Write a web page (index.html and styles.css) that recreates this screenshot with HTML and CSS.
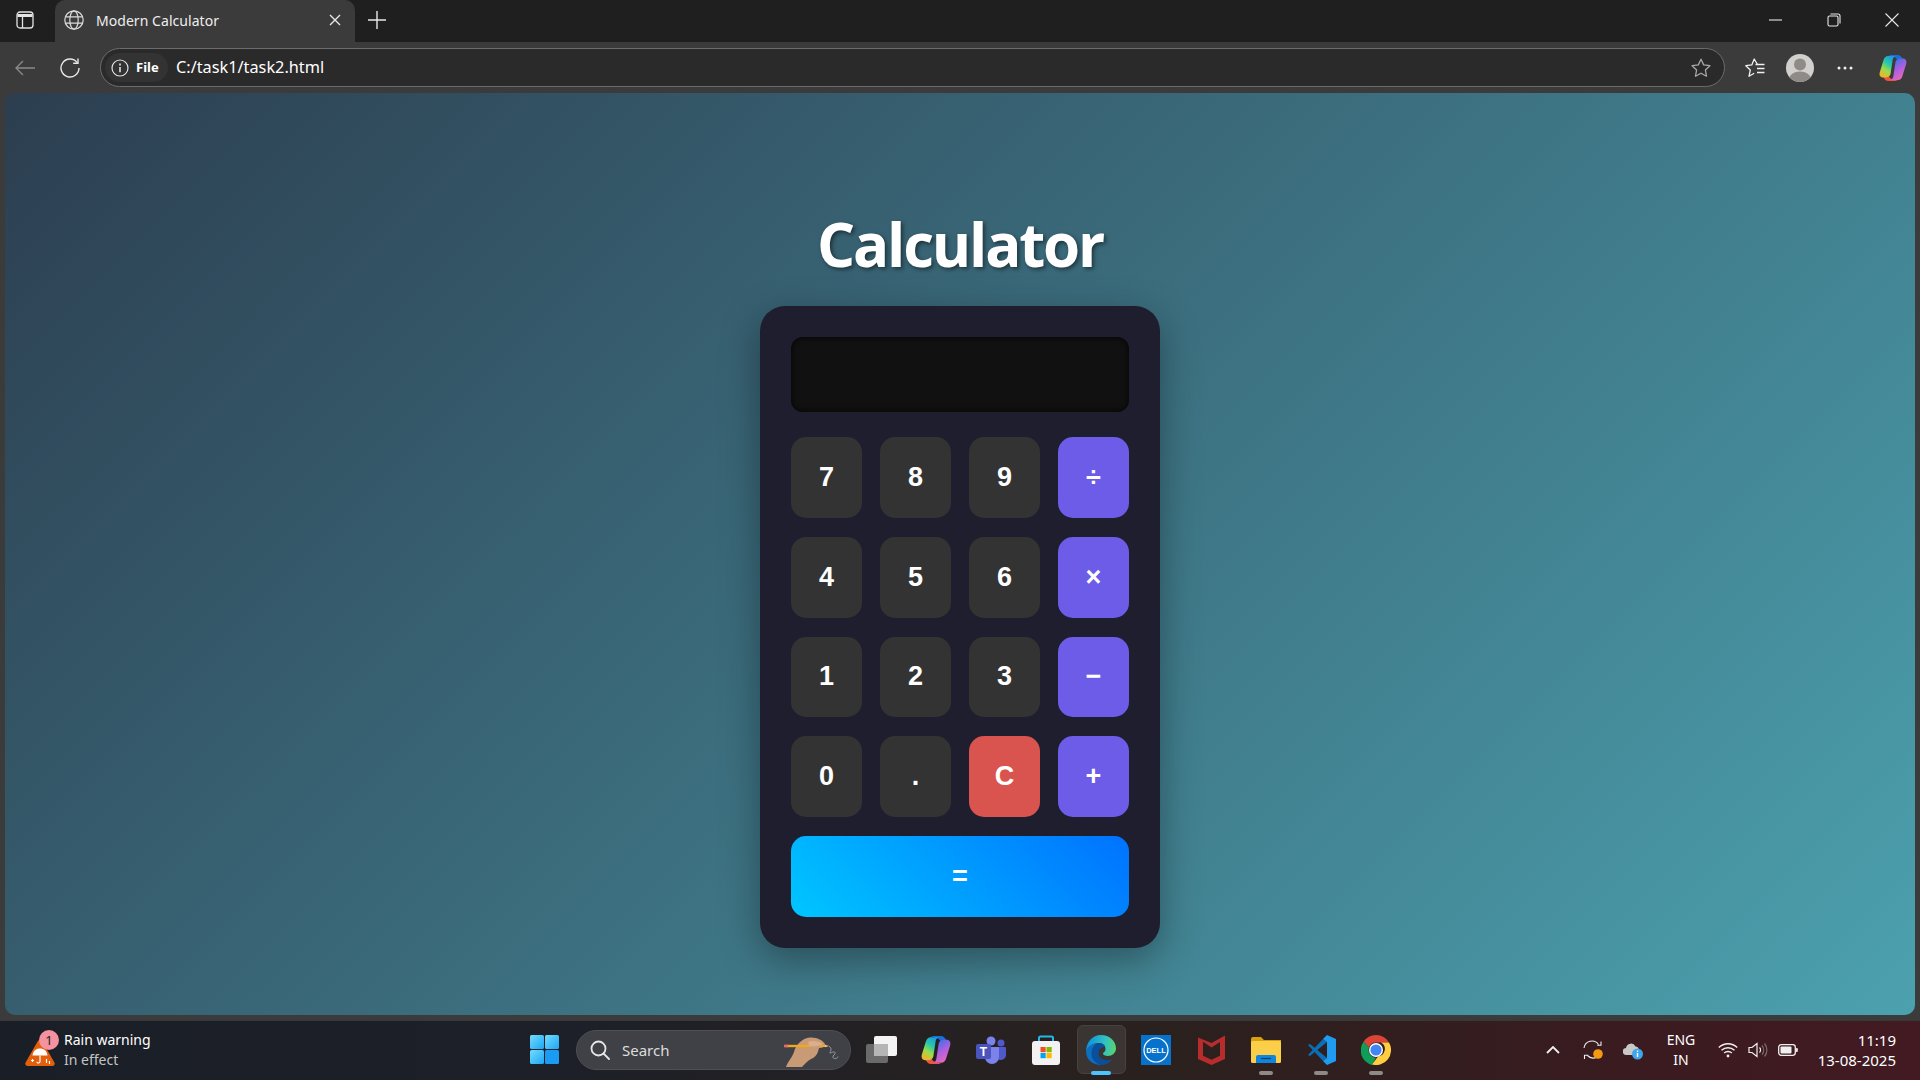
FILE: index.html
```html
<!DOCTYPE html>
<html lang="en">

<head>
    <meta charset="UTF-8">
    <meta name="viewport" content="width=device-width, initial-scale=1.0">
    <title>Modern Calculator</title>
    <link rel="stylesheet" href="styles.css">
</head>

<body>
    <!-- tab strip -->
    <div class="tabstrip">
        <svg class="ico sidebar-ico" viewBox="0 0 18 18" fill="none" stroke="#e4e4e4" stroke-width="1.3">
            <rect x="1" y="1" width="16" height="16" rx="3"/>
            <path d="M1.5 4.5h15" stroke-width="3"/>
            <path d="M6.5 5v12"/>
        </svg>
        <div class="tab">
            <svg class="ico globe-ico" viewBox="0 0 20 20" fill="none" stroke="#dcdcdc" stroke-width="1.2">
                <circle cx="10" cy="10" r="9.2"/>
                <ellipse cx="10" cy="10" rx="4.2" ry="9.2"/>
                <path d="M1.6 6.8h16.8M1.6 13.2h16.8"/>
            </svg>
            <span class="tab-title">Modern Calculator</span>
            <svg class="ico tab-close" viewBox="0 0 12 12" stroke="#e8e8e8" stroke-width="1.4"><path d="M1 1l10 10M11 1L1 11"/></svg>
        </div>
        <svg class="ico new-tab" viewBox="0 0 18 18" stroke="#e8e8e8" stroke-width="1.4"><path d="M9 0v18M0 9h18"/></svg>
        <div class="win-btns">
            <svg class="ico win-ico" viewBox="0 0 14 14" stroke="#e8e8e8" stroke-width="1.1"><path d="M0 7h13"/></svg>
            <svg class="ico win-ico" viewBox="0 0 14 14" fill="none" stroke="#e8e8e8" stroke-width="1.1">
                <rect x="1" y="3" width="10" height="10" rx="1.5"/>
                <path d="M3.5 1h7.5a2 2 0 0 1 2 2v7.5"/>
            </svg>
            <svg class="ico win-ico" viewBox="0 0 14 14" stroke="#e8e8e8" stroke-width="1.1"><path d="M.5.5l13 13M13.5.5l-13 13"/></svg>
        </div>
    </div>

    <!-- toolbar -->
    <div class="toolbar">
        <svg class="ico back-ico" viewBox="0 0 20 16" fill="none" stroke="#8a8a8a" stroke-width="1.3"><path d="M20 8H1M8 1L1 8l7 7"/></svg>
        <svg class="ico reload-ico" viewBox="0 0 20 20" fill="none" stroke="#e8e8e8" stroke-width="1.4">
            <path d="M17.2 4.6A9 9 0 1 0 19 10"/>
            <path d="M18 .5v4.7h-4.8"/>
        </svg>
        <div class="urlbar">
            <div class="file-pill">
                <svg class="ico info-ico" viewBox="0 0 18 18" fill="none" stroke="#e0e0e0" stroke-width="1.2">
                    <circle cx="9" cy="9" r="8"/>
                    <path d="M9 8v5.2" stroke-width="1.6"/>
                    <path d="M9 4.6v1.8" stroke-width="1.7"/>
                </svg>
                <span class="file-label">File</span>
            </div>
            <span class="url-text">C:/task1/task2.html</span>
            <svg class="ico star-ico" viewBox="0 0 20 20" fill="none" stroke="#a8a8a8" stroke-width="1.3" stroke-linejoin="round">
                <path d="M10 1.2l2.7 5.7 6.2.8-4.5 4.3 1.1 6.2L10 15.2l-5.5 3 1.1-6.2L1.1 7.7l6.2-.8z"/>
            </svg>
        </div>
        <svg class="ico fav-ico" viewBox="0 0 20 20" fill="none" stroke="#f0f0f0" stroke-width="1.3" stroke-linejoin="round">
            <path d="M12.5 6.5L9.2 1 6.8 6.9.8 7.7l4.5 4.3-1.3 6.3 5.2-3"/>
            <path d="M10.5 6.5h9M12 10.5h7.5M12 14.5h7.5"/>
        </svg>
        <svg class="ico avatar-ico" viewBox="0 0 28 28">
            <defs><clipPath id="av"><circle cx="14" cy="14" r="14"/></clipPath></defs>
            <circle cx="14" cy="14" r="14" fill="#d2d0cc"/>
            <g clip-path="url(#av)" fill="#8f8c88">
                <circle cx="14" cy="10.5" r="6"/>
                <ellipse cx="14" cy="25" rx="11" ry="7.5"/>
            </g>
        </svg>
        <svg class="ico dots-ico" viewBox="0 0 16 4" fill="#f0f0f0">
            <circle cx="2" cy="2" r="1.5"/><circle cx="8" cy="2" r="1.5"/><circle cx="14" cy="2" r="1.5"/>
        </svg>
        <svg class="ico copilot-ico" viewBox="0 0 28 28">
            <defs>
                <linearGradient id="cpL" x1="0.7" y1="0" x2="0.2" y2="1">
                    <stop offset="0" stop-color="#1b9be6"/><stop offset=".35" stop-color="#27c9a8"/>
                    <stop offset=".65" stop-color="#9bdc4a"/><stop offset="1" stop-color="#f7b02a"/>
                </linearGradient>
                <linearGradient id="cpR" x1="0.3" y1="0" x2="0.8" y2="1">
                    <stop offset="0" stop-color="#3a6fe8"/><stop offset=".5" stop-color="#b15fe0"/>
                    <stop offset="1" stop-color="#f06bb0"/>
                </linearGradient>
            </defs>
            <path fill="#1a6fd8" d="M9 1h9.500c2.500 0 4 1.500 5 4l1 3-6-1c-1-3-2-4-4-4z"/>
            <path fill="#f2553d" d="M19 27H9.500c-2.500 0-4-1.500-5-4l-1-3 6 1c1 3 2 4 4 4z"/>
            <path fill="url(#cpL)" d="M9 2h8c-1.500 0-2.800 1.200-3.300 3.500L11.500 20c-.6 2.400-2.500 3.500-5.500 3.500H4c-2.800 0-4-2.500-3.200-5.300L4.400 6.500C5.200 3.500 6.800 2 9 2z"/>
            <path fill="url(#cpR)" d="M19 26h-8c1.500 0 2.800-1.200 3.300-3.500L16.500 8c.6-2.400 2.500-3.500 5.500-3.500h2c2.800 0 4 2.500 3.200 5.300l-3.600 11.700C22.800 24.500 21.200 26 19 26z"/>
        </svg>
    </div>

    <!-- the page itself -->
    <div class="viewport">
        <main class="page">
            <h1 class="page-title">Calculator</h1>
            <div class="calculator">
                <div class="display"></div>
                <div class="buttons">
                    <button class="btn">7</button>
                    <button class="btn">8</button>
                    <button class="btn">9</button>
                    <button class="btn op">÷</button>
                    <button class="btn">4</button>
                    <button class="btn">5</button>
                    <button class="btn">6</button>
                    <button class="btn op">×</button>
                    <button class="btn">1</button>
                    <button class="btn">2</button>
                    <button class="btn">3</button>
                    <button class="btn op">−</button>
                    <button class="btn">0</button>
                    <button class="btn">.</button>
                    <button class="btn clear">C</button>
                    <button class="btn op">+</button>
                    <button class="btn equal">=</button>
                </div>
            </div>
        </main>
    </div>

    <!-- windows taskbar -->
    <div class="taskbar">
        <div class="weather">
            <div class="weather-icon">
                <svg class="ico rain-ico" viewBox="0 0 30 30">
                    <path fill="#e35f0c" d="M15 3c1 0 1.800.5 2.400 1.500l12 21c.9 1.700 0 3.500-2 3.500H2.600c-2 0-2.900-1.800-2-3.500l12-21C13.200 3.500 14 3 15 3z"/>
                    <path fill="#fff" d="M7.500 18.500C8 14 11 11.500 15 11.500s7 2.500 7.500 7z"/>
                    <path fill="none" stroke="#fff" stroke-width="1.200" d="M15 18.500v6c0 2-3 2-3 .2"/>
                    <path stroke="#fff" stroke-width="1.200" d="M7.500 22v3M6 23.500h3M21.500 22v4M24.500 24v3"/>
                </svg>
                <span class="weather-badge">1</span>
            </div>
            <div class="weather-text">
                <span class="weather-title">Rain warning</span>
                <span class="weather-sub">In effect</span>
            </div>
        </div>

        <div class="task-center">
            <div class="task-slot">
                <svg class="ico start-ico" viewBox="0 0 29 29">
                    <defs>
                        <linearGradient id="winA" x1="0" y1="0" x2="1" y2="1"><stop offset="0" stop-color="#74dcfb"/><stop offset="1" stop-color="#1ba6f5"/></linearGradient>
                    </defs>
                    <rect x="0" y="0" width="14" height="14" rx="1.500" fill="url(#winA)"/>
                    <rect x="15" y="0" width="14" height="14" rx="1.500" fill="url(#winA)"/>
                    <rect x="0" y="15" width="14" height="14" rx="1.500" fill="url(#winA)"/>
                    <rect x="15" y="15" width="14" height="14" rx="1.500" fill="#1a9cf2"/>
                </svg>
            </div>
            <div class="search-box">
                <svg class="ico search-ico" viewBox="0 0 20 20" fill="none" stroke="#e6e6e6" stroke-width="1.800">
                    <circle cx="8.500" cy="8.500" r="7"/><path d="M13.500 13.500l5.500 5.500" stroke-linecap="round"/>
                </svg>
                <span class="search-text">Search</span>
                <svg class="ico hand-ico" viewBox="0 0 66 34">
                    <path fill="none" stroke="#9a9a9a" stroke-width="1" d="M47 12.500c3 1 2 4 1 6s4-2 5 0-3 3-2 5 5 1 5-1"/>
                    <path fill="#c99a76" d="M4 33C6 27 10 24 12 18 14 10 21 4 28 3.500 34 3 41 6 43 10c.5 3-3 4-6 4-1 5-3 9-8 11-4 2-6 5-9 8z"/>
                    <path stroke="#f0a81e" stroke-width="2.400" d="M4 12h24"/>
                    <path stroke="#e86b6b" stroke-width="2.600" d="M2 12h4"/>
                    <path fill="#dcae8a" d="M26 8c4-2 11-1 15 2-3 2-10 3-14 2z"/>
                    <path stroke="#f0a81e" stroke-width="2" d="M38 12h6"/>
                    <path fill="#e8c79a" d="M43 10.800l4 1.200-4 1.200z"/>
                </svg>
            </div>
            <div class="task-slot">
                <svg class="ico taskview-ico" viewBox="0 0 31 27">
                    <rect x="0" y="8" width="22" height="19" rx="2" fill="#6a6a6a"/>
                    <rect x="8" y="0" width="23" height="20" rx="2" fill="#f4f4f4"/>
                    <path d="M8 8h14v12H8z" fill="#b5b5b5"/>
                </svg>
            </div>
            <div class="task-slot">
                <svg class="ico task-ico" viewBox="0 0 28 28">
                    <path fill="#1a6fd8" d="M9 1h9.500c2.500 0 4 1.500 5 4l1 3-6-1c-1-3-2-4-4-4z"/>
                    <path fill="#f2553d" d="M19 27H9.500c-2.500 0-4-1.500-5-4l-1-3 6 1c1 3 2 4 4 4z"/>
                    <path fill="url(#cpL)" d="M9 2h8c-1.500 0-2.800 1.200-3.300 3.500L11.500 20c-.6 2.400-2.500 3.500-5.500 3.500H4c-2.800 0-4-2.500-3.200-5.300L4.400 6.500C5.200 3.500 6.800 2 9 2z"/>
                    <path fill="url(#cpR)" d="M19 26h-8c1.500 0 2.800-1.200 3.300-3.500L16.500 8c.6-2.400 2.500-3.500 5.500-3.500h2c2.800 0 4 2.500 3.200 5.300l-3.600 11.700C22.800 24.500 21.200 26 19 26z"/>
                </svg>
            </div>
            <div class="task-slot">
                <svg class="ico task-ico" viewBox="0 0 30 30">
                    <circle cx="15" cy="6" r="4.500" fill="#7b83eb"/>
                    <circle cx="25" cy="8" r="3.500" fill="#5059c9"/>
                    <path fill="#5059c9" d="M20 12h9a1 1 0 0 1 1 1v7a5 5 0 0 1-5 5c-3 0-5-2-5-5z"/>
                    <path fill="#7b83eb" d="M9 12h13a1 1 0 0 1 1 1v9a7 7 0 0 1-14 0z"/>
                    <rect x="0" y="9" width="15" height="15" rx="2" fill="#4b53bc"/>
                    <text class="teams-t" x="7.500" y="21">T</text>
                </svg>
            </div>
            <div class="task-slot">
                <svg class="ico task-ico" viewBox="0 0 30 30">
                    <path fill="none" stroke="#22b8e8" stroke-width="2" d="M8 8V3a1.500 1.500 0 0 1 1.500-1.500h11A1.500 1.500 0 0 1 22 3v5"/>
                    <rect x="1" y="6" width="28" height="24" rx="3" fill="#f2f2f2"/>
                    <rect x="9.500" y="12" width="5.200" height="5.200" fill="#f25022"/>
                    <rect x="15.500" y="12" width="5.200" height="5.200" fill="#7fba00"/>
                    <rect x="9.500" y="18" width="5.200" height="5.200" fill="#00a4ef"/>
                    <rect x="15.500" y="18" width="5.200" height="5.200" fill="#ffb900"/>
                </svg>
            </div>
            <div class="task-slot active">
                <div class="active-box">
                    <svg class="ico task-ico" viewBox="0 0 30 30">
                        <defs>
                            <linearGradient id="edgeA" x1="0" y1="0.5" x2="1" y2="0.6"><stop offset="0" stop-color="#0f8fdc"/><stop offset=".6" stop-color="#2fc1c4"/><stop offset="1" stop-color="#5ad46e"/></linearGradient>
                        </defs>
                        <path fill="url(#edgeA)" d="M15 0c8.500 0 15 6 15 13.500 0 4.500-4 7.500-8 7.500-3 0-5-1-5-2.500 0-1 2.500-1.500 2.500-4.500 0-3.500-3-6-7-6C7 8 1.500 12 0 17 0 7 6.500 0 15 0z"/>
                        <path fill="#0b6fc0" d="M0 16c2-5 7-8 12-8-4 2-6.500 6-6 11 .5 5 4 9 9.500 11C7 30 0 25 0 16z"/>
                        <path fill="#0a4f9c" d="M12 8.500c4-1 7 1.500 7 3.500-3 0-6.500 2-6.500 6 0 5 5.500 8.500 11 7 1-.3 2-.7 3-1.500C24 28 19.500 30 15.500 30 9 28 5.500 24 5.500 19 5.500 14 8 10 12 8.500z"/>
                    </svg>
                </div>
                <span class="run-dot blue"></span>
            </div>
            <div class="task-slot">
                <svg class="ico task-ico" viewBox="0 0 30 30">
                    <rect width="30" height="30" fill="#0672cb"/>
                    <circle cx="15" cy="15" r="12" fill="none" stroke="#fff" stroke-width="1.200"/>
                    <text class="dell-t" x="15" y="17.600">DELL</text>
                </svg>
            </div>
            <div class="task-slot">
                <svg class="ico mcafee-ico" viewBox="0 0 27 30">
                    <path fill="#b92c2c" d="M13.500 30L0 24V2.500L13.500 8 27 .5V24zM5 6.800v14l8.500 4 8.500-4V7l-8.500 5.500z"/>
                </svg>
            </div>
            <div class="task-slot">
                <svg class="ico task-ico" viewBox="0 0 30 30">
                    <path fill="#d9a00f" d="M0 4a2 2 0 0 1 2-2h8l3 3h17v6H0z"/>
                    <rect x="0" y="6" width="30" height="22" rx="1.500" fill="#fbcf4a"/>
                    <path d="M5 22a2 2 0 0 1 2-2h16a2 2 0 0 1 2 2v6H5z" fill="#0f86dc"/>
                    <path stroke="#093e70" stroke-width="1.200" d="M10 23.500h10"/>
                </svg>
                <span class="run-dot"></span>
            </div>
            <div class="task-slot">
                <svg class="ico task-ico" viewBox="0 0 30 30">
                    <path fill="#0a6fb8" d="M2 10l2-1 17 14-4 3z"/>
                    <path fill="#0a6fb8" d="M2 20l2 1L21 7l-4-3z"/>
                    <path fill="#1f9cf0" d="M21 0l9 4v22l-9 4-4-4 4-3V7l-4-3z"/>
                </svg>
                <span class="run-dot"></span>
            </div>
            <div class="task-slot">
                <svg class="ico task-ico" viewBox="0 0 30 30">
                    <path fill="#db4437" d="M15 0a15 15 0 0 1 13 7.500H15a7.500 7.500 0 0 0-7 5L2.500 6.800A15 15 0 0 1 15 0z"/>
                    <path fill="#0f9d58" d="M2.500 6.800L8 12.500a7.500 7.500 0 0 0 7 10L11 30A15 15 0 0 1 2.500 6.800z"/>
                    <path fill="#ffcd40" d="M28 7.500A15 15 0 0 1 11 29.500l6-8a7.500 7.500 0 0 0 3-14z"/>
                    <circle cx="15" cy="15" r="7" fill="#fff"/>
                    <circle cx="15" cy="15" r="5.600" fill="#4285f4"/>
                </svg>
                <span class="run-dot"></span>
            </div>
        </div>

        <div class="tray">
            <svg class="ico chevron-ico" viewBox="0 0 14 8" fill="none" stroke="#f0f0f0" stroke-width="1.800"><path d="M1 7l6-6 6 6"/></svg>
            <svg class="ico sync-ico" viewBox="0 0 20 20" fill="none" stroke="#efefef" stroke-width="1.100">
                <path d="M1 8a8 8 0 0 1 14.500-3.500M18 1.500v3.800h-3.800"/>
                <path d="M14 17a8 8 0 0 1-9.500-1.500M1.500 19v-3.800h3.800"/>
                <circle cx="15" cy="14" r="4.800" fill="#f59a10" stroke="none"/>
            </svg>
            <svg class="ico cloud-ico" viewBox="0 0 20 20">
                <path fill="#c8c8c8" d="M3.500 15A3.500 3.500 0 0 1 3 8a5 5 0 0 1 9.500-1.500A4 4 0 0 1 16 10v2l-3 3z"/>
                <circle cx="14.500" cy="14" r="5.500" fill="#41a5ee"/>
                <path stroke="#fff" stroke-width="1.400" d="M14.500 13v4M14.500 10.500v1.400"/>
            </svg>
            <div class="lang"><span>ENG</span><span>IN</span></div>
            <svg class="ico wifi-ico" viewBox="0 0 20 16" fill="none" stroke="#f0f0f0" stroke-width="1.400">
                <path d="M.8 5.500a13 13 0 0 1 18.400 0M3.500 8.300a9.500 9.500 0 0 1 13 0M6.200 11a5.500 5.500 0 0 1 7.600 0"/>
                <circle cx="10" cy="14" r="1.400" fill="#f0f0f0" stroke="none"/>
            </svg>
            <svg class="ico sound-ico" viewBox="0 0 20 16" fill="none" stroke="#f0f0f0" stroke-width="1.200">
                <path d="M1 5.500h3L9 1.500v13l-5-4H1z"/>
                <path d="M11.500 5.500a3.500 3.500 0 0 1 0 5"/>
                <path d="M14 3.500a7 7 0 0 1 0 9M16.500 1.500a10 10 0 0 1 0 13" stroke="#7d6a6c"/>
            </svg>
            <svg class="ico battery-ico" viewBox="0 0 20 12">
                <rect x=".7" y=".7" width="16.600" height="10.600" rx="2.500" fill="none" stroke="#f0f0f0" stroke-width="1.300"/>
                <rect x="2.500" y="2.500" width="11" height="7" rx="1" fill="#f0f0f0"/>
                <rect x="18" y="4" width="1.800" height="4" rx=".8" fill="#f0f0f0"/>
            </svg>
            <div class="clock"><span>11:19</span><span>13-08-2025</span></div>
        </div>
    </div>
</body>

</html>
```

FILE: styles.css
```css
* {
    margin: 0;
    padding: 0;
    box-sizing: border-box;
}

html,
body {
    width: 1920px;
    height: 1080px;
    overflow: hidden;
}

body {
    display: flex;
    flex-direction: column;
    background: #3b3b3b;
    font-family: "Noto Sans", "Open Sans", sans-serif;
    color: #fff;
}

.ico {
    display: block;
    flex: none;
}

/* tab strip */
.tabstrip {
    height: 42px;
    background: #1f1f1f;
    display: flex;
    align-items: center;
    flex: none;
    padding-bottom: 2px;
}

.sidebar-ico {
    width: 18px;
    height: 18px;
    margin: 0 21px 0 16px;
}

.tab {
    width: 300px;
    height: 42px;
    margin-bottom: -2px;
    background: #3b3b3b;
    border-radius: 10px 10px 0 0;
    display: flex;
    align-items: center;
    padding: 0 14px 2px 9px;
}

.globe-ico {
    width: 20px;
    height: 20px;
}

.tab-title {
    margin-left: 12px;
    font-size: 14px;
    letter-spacing: 0.05px;
    color: #eee;
    flex: 1;
}

.tab-close {
    width: 12px;
    height: 12px;
}

.new-tab {
    width: 18px;
    height: 18px;
    margin-left: 13px;
}

.win-btns {
    margin-left: auto;
    display: flex;
    gap: 44px;
    padding-right: 21px;
}

.win-ico {
    width: 14px;
    height: 14px;
}

/* toolbar */
.toolbar {
    height: 51px;
    background: #3b3b3b;
    display: flex;
    align-items: center;
    flex: none;
}

.back-ico {
    width: 20px;
    height: 16px;
    margin: 0 25px 0 15px;
}

.reload-ico {
    width: 20px;
    height: 20px;
    margin-right: 20px;
}

.urlbar {
    width: 1625px;
    height: 39px;
    background: #2a2a2a;
    border: 1px solid #6c6c6c;
    border-radius: 20px;
    display: flex;
    align-items: center;
    padding: 0 13px 0 4px;
}

.file-pill {
    height: 29px;
    width: 63px;
    background: #333;
    border-radius: 15px;
    display: flex;
    align-items: center;
    padding-left: 6px;
    gap: 7px;
}

.info-ico {
    width: 18px;
    height: 18px;
}

.file-label {
    font-size: 13px;
    font-weight: 700;
    padding-bottom: 2px;
}

.url-text {
    margin-left: 8px;
    font-size: 16.3px;
    flex: 1;
    padding-bottom: 2px;
}

.star-ico {
    width: 20px;
    height: 20px;
}

.fav-ico {
    width: 20px;
    height: 20px;
    margin-left: 20px;
}

.avatar-ico {
    width: 28px;
    height: 28px;
    margin-left: 21px;
}

.dots-ico {
    width: 16px;
    height: 4px;
    margin-left: 23px;
}

.copilot-ico {
    width: 28px;
    height: 28px;
    margin-left: 26px;
}

/* page area */
.viewport {
    flex: 1;
    padding: 0 5px 5px;
    min-height: 0;
}

.page {
    height: 100%;
    border-radius: 10px;
    background: linear-gradient(135deg, #2c3e50, #4ca1af);
    display: flex;
    flex-direction: column;
    align-items: center;
    padding-top: 114px;
}

.page-title {
    font-family: "Open Sans", "Noto Sans", sans-serif;
    font-size: 60px;
    line-height: 75px;
    font-weight: 700;
    letter-spacing: -2.2px;
    margin-bottom: 24px;
    text-shadow: 2px 2px 4px rgba(0, 0, 0, 0.5);
}

.calculator {
    width: 400px;
    padding: 31px;
    background: #1e1e2f;
    border-radius: 25px;
    box-shadow: 0 12px 38px rgba(0, 0, 0, 0.35);
}

.display {
    height: 75px;
    margin-bottom: 25px;
    background: #111;
    border-radius: 12px;
    box-shadow: inset 0 0 6px rgba(0, 0, 0, 0.9);
}

.buttons {
    display: grid;
    grid-template-columns: repeat(4, 71px);
    grid-auto-rows: 80.75px;
    column-gap: 18px;
    row-gap: 19px;
}

.btn {
    border: none;
    border-radius: 15px;
    background: #333;
    color: #fff;
    font-family: "Liberation Sans", Arial, sans-serif;
    font-size: 27px;
    font-weight: 700;
}

.btn.op {
    background: #6c5ce7;
}

.btn.clear {
    background: #d9534f;
}

.btn.equal {
    grid-column: span 4;
    background: linear-gradient(45deg, #00c6ff, #0072ff);
}

/* taskbar */
.taskbar {
    height: 60px;
    flex: none;
    display: flex;
    align-items: center;
    position: relative;
    padding-bottom: 2px;
    border-top: 1px solid #36383a;
    background: linear-gradient(90deg, #1a1e26 0%, #1d2028 30%, #2a211e 60%, #3a1b20 85%, #431a22 100%);
}

.weather {
    width: 517px;
    display: flex;
    align-items: center;
    padding-left: 25px;
    flex: none;
}

.weather-icon {
    position: relative;
    width: 30px;
    height: 34px;
    display: flex;
    align-items: flex-end;
}

.rain-ico {
    width: 30px;
    height: 30px;
}

.weather-badge {
    position: absolute;
    left: 14px;
    top: -3px;
    width: 20px;
    height: 20px;
    border-radius: 50%;
    background: #f4929f;
    color: #222;
    font-size: 13px;
    line-height: 20px;
    text-align: center;
}

.weather-text {
    display: flex;
    flex-direction: column;
    margin-left: 9px;
    font-size: 14px;
    line-height: 20px;
}

.weather-sub {
    color: #c4c4c4;
}

.task-center {
    display: flex;
    align-items: center;
}

.task-slot {
    width: 55px;
    height: 57px;
    display: flex;
    align-items: center;
    justify-content: center;
    position: relative;
}

.start-ico {
    width: 29px;
    height: 29px;
}

.search-box {
    width: 275px;
    height: 40px;
    margin: 0 2.5px 0 4px;
    background: #3f4146;
    border: 1px solid #4d4f53;
    border-radius: 20px;
    display: flex;
    align-items: center;
    padding: 0 0 0 13px;
    position: relative;
}

.search-ico {
    width: 20px;
    height: 20px;
}

.search-text {
    margin-left: 12px;
    font-size: 15px;
    color: #ddd;
}

.hand-ico {
    position: absolute;
    right: 2px;
    top: 3px;
    width: 66px;
    height: 34px;
}

.taskview-ico {
    width: 31px;
    height: 27px;
}

.task-ico {
    width: 30px;
    height: 30px;
}

.mcafee-ico {
    width: 27px;
    height: 30px;
}

.active-box {
    width: 49px;
    height: 49px;
    background: #3a3533;
    border: 1px solid #48423f;
    border-radius: 6px;
    display: flex;
    align-items: center;
    justify-content: center;
}

.run-dot {
    position: absolute;
    bottom: 3px;
    left: 50%;
    width: 14px;
    height: 4px;
    margin-left: -7px;
    border-radius: 2px;
    background: #8f8a87;
}

.run-dot.blue {
    width: 20px;
    margin-left: -10px;
    background: #4cc2ff;
}

.teams-t {
    font-family: "Liberation Sans", sans-serif;
    font-size: 12px;
    font-weight: 700;
    fill: #fff;
    text-anchor: middle;
}

.dell-t {
    font-family: "Liberation Sans", sans-serif;
    font-size: 7.5px;
    font-weight: 700;
    fill: #fff;
    text-anchor: middle;
}

.tray {
    margin-left: auto;
    display: flex;
    align-items: center;
    padding-right: 24px;
}

.chevron-ico {
    width: 14px;
    height: 8px;
}

.sync-ico {
    width: 20px;
    height: 20px;
    margin-left: 23px;
}

.cloud-ico {
    width: 20px;
    height: 20px;
    margin-left: 20px;
}

.lang {
    width: 30px;
    margin-left: 23px;
    display: flex;
    flex-direction: column;
    align-items: center;
    font-size: 14px;
    line-height: 20px;
}

.wifi-ico {
    width: 20px;
    height: 16px;
    margin-left: 22px;
}

.sound-ico {
    width: 20px;
    height: 16px;
    margin-left: 10px;
}

.battery-ico {
    width: 20px;
    height: 12px;
    margin-left: 10px;
}

.clock {
    width: 98px;
    display: flex;
    flex-direction: column;
    align-items: flex-end;
    font-size: 15px;
    line-height: 20px;
}
```
